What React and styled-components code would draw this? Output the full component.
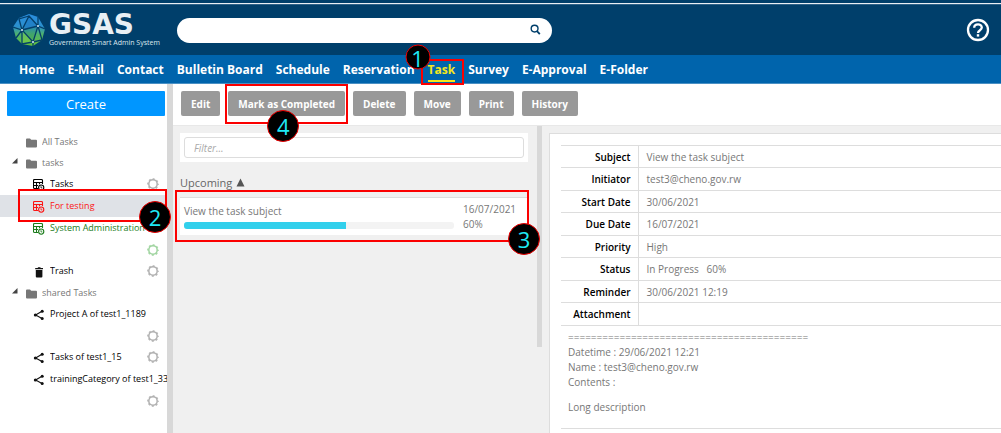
import React from "react";
import styled, { createGlobalStyle, css } from "styled-components";

const GlobalStyle = createGlobalStyle`
  * { box-sizing: border-box; }
  body {
    margin: 0;
    background: #fff;
    color: #777;
    font-family: "Open Sans", "Noto Sans", sans-serif;
    font-size: 10px;
  }
  button, input { font-family: inherit; }
`;

const Page = styled.div`
  display: flex;
  flex-direction: column;
  min-height: 100vh;
`;

/* ---------- callouts ---------- */

const Callout = styled.span`
  position: absolute;
  z-index: 3;
  inset: ${(p) => p.$inset};
  border: 2px solid #fb0000;
  pointer-events: none;
`;

const Step = styled.span`
  position: absolute;
  z-index: 4;
  top: ${(p) => p.$top};
  left: ${(p) => p.$left};
  transform: translate(-50%, -50%);
  display: flex;
  align-items: center;
  justify-content: center;
  width: ${(p) => (p.$small ? "25px" : "32px")};
  height: ${(p) => (p.$small ? "25px" : "32px")};
  border: 1px solid #e00;
  border-radius: 50%;
  background: #000;
  color: #1fe9f5;
  font-size: 22px;
  font-weight: 500;
  line-height: 1;
  pointer-events: none;
`;

/* ---------- header ---------- */

const Header = styled.header`
  display: flex;
  align-items: center;
  height: 55px;
  padding: 5px 11px 0 13px;
  background: linear-gradient(#003f6b 3px, #e9eff4 3px, #e9eff4 4px, #2f6288 4px, #2f6288 5px, #003f6b 5px);
`;

const Brand = styled.a`
  display: flex;
  align-items: center;
  gap: 4px;
  width: 164px;
  color: #e8eff4;
  text-decoration: none;
`;

const BrandText = styled.span`
  display: flex;
  flex-direction: column;
`;

const BrandName = styled.strong`
  font: 700 28px/26px "DejaVu Sans", sans-serif;
`;

const BrandLine = styled.span`
  font: 400 7px/10px "Open Sans", sans-serif;
  color: #dde7ee;
  white-space: nowrap;
`;

const Search = styled.form`
  display: flex;
  align-items: center;
  width: 375px;
  height: 25px;
  padding: 0 10px 0 14px;
  border-radius: 13px;
  background: #fff;
`;

const SearchInput = styled.input`
  flex: 1;
  min-width: 0;
  border: 0;
  outline: 0;
  background: transparent;
  font-size: 12px;
`;

const IconButton = styled.button`
  display: flex;
  padding: 0;
  border: 0;
  background: none;
  color: ${(p) => p.$color || "inherit"};
`;

const HelpSlot = styled.div`
  margin-left: auto;
`;

const Nav = styled.nav`
  display: flex;
  align-items: center;
  gap: 13px;
  height: 29px;
  padding: 0 19px;
  background: #0064ac;
  border-bottom: 1px solid #4a90c4;
`;

const NavItem = styled.div`
  position: relative;
  height: 28px;
`;

const NavLink = styled.a`
  display: block;
  height: 27px;
  line-height: 29px;
  font-size: 12px;
  font-weight: 700;
  color: #fff;
  text-decoration: none;
  white-space: nowrap;
  ${(p) => p.$active && css`
    color: #f4e61c;
    border-bottom: 2px solid #f4e61c;
  `}
`;

/* ---------- body ---------- */

const Body = styled.div`
  display: grid;
  grid-template-columns: 173px minmax(0, 1fr);
  flex: 1;
`;

const Sidebar = styled.aside`
  position: relative;
  z-index: 1;
  padding-top: 7px;
  border-right: 6px solid #d8d8d8;
  background: #fff;
`;

const CreateButton = styled.button`
  display: block;
  width: calc(100% - 9px);
  height: 25px;
  margin: 0 2px 15px 7px;
  padding: 0;
  border: 0;
  border-radius: 1px;
  background: #0096ff;
  color: #fff;
  font-size: 13px;
`;

const Tree = styled.ul`
  margin: 0;
  padding: 0;
  list-style: none;
`;

const TreeRow = styled.li`
  position: relative;
  display: flex;
  align-items: center;
  height: ${(p) => (p.$folder ? "21px" : "22px")};
  padding-left: ${(p) => (p.$folder ? "12px" : "33px")};
  padding-right: 8px;
  background: ${(p) => (p.$selected ? "#dfe2e7" : "transparent")};
  color: ${(p) => p.$color};
`;

const GearRow = styled.li`
  display: flex;
  align-items: center;
  justify-content: flex-end;
  height: 21px;
  padding-right: 8px;
`;

const Arrow = styled.span`
  display: flex;
  width: 14px;
  height: 10px;
`;

const TreeIcon = styled.span`
  display: flex;
  padding-top: 2px;
`;

const TreeLink = styled.a`
  flex: 1;
  overflow: hidden;
  margin-left: 5px;
  margin-right: ${(p) => (p.$wide ? "-8px" : "0")};
  color: inherit;
  font-size: 9px;
  font-weight: 500;
  line-height: 16px;
  text-decoration: none;
  white-space: nowrap;
`;

const Main = styled.main`
  display: flex;
  flex-direction: column;
  background: #f0f0f0;
`;

const Toolbar = styled.div`
  position: relative;
  z-index: 2;
  display: flex;
  gap: 8px;
  height: 42px;
  padding: 7px 8px;
  background: #fff;
  border-bottom: 1px solid #e8e8e8;
`;

const ToolItem = styled.div`
  position: relative;
`;

const ToolButton = styled.button`
  height: 25px;
  padding: 0 10px;
  border: 0;
  border-radius: 2px;
  background: #999;
  color: #fff;
  font-size: 10px;
  font-weight: 700;
  white-space: nowrap;
`;

const Panes = styled.div`
  display: flex;
  flex: 1;
`;

const ListPane = styled.section`
  position: relative;
  z-index: 1;
  width: 364px;
  padding: 7px 9px 0 7px;
`;

const FilterBox = styled.div`
  padding: 4px;
  background: #fff;
`;

const FilterInput = styled.input`
  display: block;
  width: 100%;
  height: 21px;
  padding: 0 9px;
  border: 1px solid #ddd;
  border-radius: 3px;
  background: #fff;
  font-size: 10px;
  font-style: italic;
  &::placeholder { color: #aaa; opacity: 1; }
`;

const GroupTitle = styled.h2`
  display: flex;
  align-items: center;
  gap: 4px;
  height: 16px;
  margin: 12px 0 7px;
  color: #666;
  font-size: 11px;
  font-weight: 400;
`;

const Card = styled.article`
  position: relative;
  display: grid;
  grid-template-columns: minmax(0, 1fr) 57px;
  column-gap: 9px;
  height: 38px;
  padding: 4px 8px 4px 4px;
  border-top: 1px solid #ddd;
  background: #fff;
`;

const CardMain = styled.div`
  display: flex;
  flex-direction: column;
  gap: 3px;
  padding-top: 2px;
`;

const CardSide = styled.div`
  line-height: 15px;
`;

const CardTitle = styled.div`
  line-height: 15px;
`;

const Track = styled.div`
  height: 7px;
  border-radius: 3px;
  overflow: hidden;
  background: #f3f3f3;
`;

const Fill = styled.div`
  height: 100%;
  background: #32d0ec;
`;

const Splitter = styled.div`
  width: 5px;
  height: 221px;
  background: #d8d8d8;
`;

const Detail = styled.section`
  flex: 1;
  min-width: 0;
  margin: 7px 0 0 7px;
  padding: 11px 0 0 11px;
  border: solid #ddd;
  border-width: 1px 0 0 1px;
  background: #fff;
`;

const Fields = styled.table`
  width: 100%;
  border-collapse: collapse;
  border-top: 1px solid #ddd;
`;

const FieldRow = styled.tr`
  height: 22px;
  border-bottom: 1px solid #ddd;
  &:nth-child(even) { height: 23px; }
`;

const FieldName = styled.th`
  width: 77px;
  padding: 0 7px 0 0;
  border-right: 1px solid #ddd;
  color: #000;
  font-weight: 600;
  line-height: 14px;
  text-align: right;
`;

const FieldValue = styled.td`
  padding: 0 8px;
  line-height: 14px;
  white-space: pre;
`;

const Description = styled.div`
  padding: 4px 7px 13px;
  border-bottom: 1px solid #ddd;
  line-height: 15px;
`;

const Paragraph = styled.p`
  margin: 0 0 10px;
  &:last-child { margin: 0; }
`;

/* ---------- icons ---------- */

const Globe = () => (
  <svg width="32" height="32" viewBox="0 0 32 32" aria-hidden="true">
    <defs>
      <linearGradient id="globe" x1="0" y1="0" x2="0" y2="1">
        <stop offset="0" stopColor="#2a8de0" />
        <stop offset=".4" stopColor="#2b90cc" />
        <stop offset=".62" stopColor="#4cb070" />
        <stop offset="1" stopColor="#66c238" />
      </linearGradient>
    </defs>
    <path d="M6 4L16 0L25 3L32 15L29 26L20 32L9 30L3 24L0 13Z" fill="url(#globe)" />
    <path d="M16 3L25 12L9 16Z" fill="#1268b8" opacity=".35" />
    <path d="M9 16L25 12L20 28Z" fill="#16785e" opacity=".2" />
    <path d="M9 16L20 28L9 29Z" fill="#8edb4a" opacity=".35" />
    <path
      d="M16 2L25 12L20 28L9 16ZM16 2L6 5L9 16L0 13M9 16L25 12M25 3L25 12L32 15M3 24L9 16L9 30L20 28L29 26L25 12M20 28V32"
      fill="none" stroke="#043f6a" strokeWidth="1.3"
    />
    <g fill="#d8ecf7">
      <circle cx="25" cy="12" r="1" /><circle cx="9" cy="16" r="1" /><circle cx="20" cy="28" r="1" />
    </g>
  </svg>
);

const SearchIcon = () => (
  <svg width="12" height="12" viewBox="0 0 12 12" fill="none" stroke="#003f6b" aria-hidden="true">
    <circle cx="4.6" cy="4.6" r="3.4" strokeWidth="1.4" />
    <path d="M7 7.2L9.8 10.2" strokeWidth="1.8" />
  </svg>
);

const HelpIcon = () => (
  <svg width="24" height="24" viewBox="0 0 24 24" fill="none" stroke="currentColor" aria-hidden="true">
    <circle cx="12" cy="12" r="10" strokeWidth="2.3" />
    <path d="M8.2 9.8C8.2 5.3 15.8 5.3 15.8 9.6C15.8 12.2 12 12.2 12 15" strokeWidth="2.3" />
    <path d="M12 16.2V18.6" strokeWidth="2.4" />
  </svg>
);

const FolderIcon = () => (
  <svg width="11" height="10" viewBox="0 0 11 10" aria-hidden="true">
    <path d="M0 1.4Q0 .4 1 .4H4L5.2 1.8H10Q11 1.8 11 2.8V8.4Q11 9.4 10 9.4H1Q0 9.4 0 8.4Z" fill="#777" />
  </svg>
);

const TaskIcon = () => (
  <svg width="12" height="12" viewBox="0 0 12 12" fill="none" stroke="currentColor" aria-hidden="true">
    <path d="M5 9.5H1.5Q.5 9.5 .5 8.5V1.5Q.5 .5 1.5 .5H8.5Q9.5 .5 9.5 1.5V5M.5 3.5H9.5M.5 6.5H5M3.5 3.5V9.5M6.5 3.5V5.2" strokeWidth="1.1" />
    <circle cx="8.2" cy="8.6" r="2.6" strokeWidth="1.1" />
    <path d="M8 7.2V8.9H9.3" strokeWidth=".8" />
  </svg>
);

const TrashIcon = () => (
  <svg width="12" height="12" viewBox="0 0 12 12" fill="#111" aria-hidden="true">
    <path d="M2.2 2H4.6L5.2 1.2H7.2L7.8 2H10V3.2H2.2ZM2.8 4H9.4V10.4Q9.4 11.4 8.4 11.4H3.8Q2.8 11.4 2.8 10.4Z" />
  </svg>
);

const ShareIcon = () => (
  <svg width="12" height="12" viewBox="0 0 12 12" aria-hidden="true">
    <path d="M9 2.2L2.6 6L9 9.6" fill="none" stroke="#111" strokeWidth="1.1" />
    <g fill="#111">
      <circle cx="9.2" cy="2.2" r="1.5" /><circle cx="2.4" cy="6" r="1.6" /><circle cx="9.2" cy="9.6" r="1.5" />
    </g>
  </svg>
);

const GearIcon = ({ color = "#b0b0b0" }) => (
  <svg width="12" height="12" viewBox="0 0 12 12" fill="none" stroke={color} aria-hidden="true">
    <circle cx="6" cy="6" r="4.2" strokeWidth="1.5" />
    <circle cx="6" cy="6" r="5.2" strokeWidth="1.2" strokeDasharray="2 2.084" strokeDashoffset="1" />
  </svg>
);

const CornerArrow = () => (
  <svg width="6" height="6" viewBox="0 0 6 6" aria-hidden="true"><path d="M5.5 0V5.5H0Z" fill="#444" /></svg>
);

const UpTriangle = () => (
  <svg width="9" height="9" viewBox="0 0 9 9" aria-hidden="true"><path d="M4.5 .5L8.5 8.5H.5Z" fill="#555" /></svg>
);

/* ---------- data ---------- */

const NAV = ["Home", "E-Mail", "Contact", "Bulletin Board", "Schedule", "Reservation", "Task", "Survey", "E-Approval", "E-Folder"];
const TOOLS = ["Edit", "Mark as Completed", "Delete", "Move", "Print", "History"];

const TREE = [
  { label: "All Tasks", folder: true },
  { label: "tasks", folder: true, open: true },
  { label: "Tasks", icon: TaskIcon, gear: "inline" },
  { label: "For testing", icon: TaskIcon, color: "#fb1414", selected: true },
  { label: "System Administration", icon: TaskIcon, color: "#1c7c1c", gear: "below", gearColor: "#9fd49f" },
  { label: "Trash", icon: TrashIcon, gear: "inline" },
  { label: "shared Tasks", folder: true, open: true },
  { label: "Project A of test1_1189", icon: ShareIcon, gear: "below" },
  { label: "Tasks of test1_15", icon: ShareIcon, gear: "inline" },
  { label: "trainingCategory of test1_33", icon: ShareIcon, gear: "below" },
];

const FIELDS = [
  ["Subject", "View the task subject"],
  ["Initiator", "test3@cheno.gov.rw"],
  ["Start Date", "30/06/2021"],
  ["Due Date", "16/07/2021"],
  ["Priority", "High"],
  ["Status", "In Progress   60%"],
  ["Reminder", "30/06/2021 12:19"],
  ["Attachment", ""],
];

const progress = 60;

function TreeEntry({ item }) {
  const Icon = item.folder ? FolderIcon : item.icon;
  const gear = (
    <IconButton type="button" aria-label={`${item.label} settings`}>
      <GearIcon color={item.gearColor} />
    </IconButton>
  );
  return (
    <>
      <TreeRow $folder={item.folder} $selected={item.selected} $color={item.color || (item.folder ? "#777" : "#000")}>
        {item.folder && <Arrow>{item.open && <CornerArrow />}</Arrow>}
        <TreeIcon><Icon /></TreeIcon>
        <TreeLink href="#" $wide={item.gear === "below"}>{item.label}</TreeLink>
        {item.gear === "inline" && gear}
        {item.selected && (
          <>
            <Callout $inset="-6px 0 -5px 18px" />
            <Step $top="22px" $left="155px">2</Step>
          </>
        )}
      </TreeRow>
      {item.gear === "below" && <GearRow>{gear}</GearRow>}
    </>
  );
}

export default function App() {
  return (
    <Page>
      <GlobalStyle />
      <Header>
        <Brand href="#">
          <Globe />
          <BrandText>
            <BrandName>GSAS</BrandName>
            <BrandLine>Government Smart Admin System</BrandLine>
          </BrandText>
        </Brand>
        <Search role="search">
          <SearchInput type="text" aria-label="Search" />
          <IconButton type="button" aria-label="Search"><SearchIcon /></IconButton>
        </Search>
        <HelpSlot>
          <IconButton type="button" $color="#fff" aria-label="Help"><HelpIcon /></IconButton>
        </HelpSlot>
      </Header>
      <Nav>
        {NAV.map((name) => (
          <NavItem key={name}>
            <NavLink href="#" $active={name === "Task"}>{name}</NavLink>
            {name === "Task" && (
              <>
                <Callout $inset="4px -9px -2px -7px" />
                <Step $small $top="2px" $left="-10px">1</Step>
              </>
            )}
          </NavItem>
        ))}
      </Nav>
      <Body>
        <Sidebar>
          <CreateButton type="button">Create</CreateButton>
          <Tree>
            {TREE.map((item) => <TreeEntry key={item.label} item={item} />)}
          </Tree>
        </Sidebar>
        <Main>
          <Toolbar>
            {TOOLS.map((name) => (
              <ToolItem key={name}>
                <ToolButton type="button">{name}</ToolButton>
                {name === "Mark as Completed" && (
                  <>
                    <Callout $inset="-7px -3px -6px -3px" />
                    <Step $top="35px" $left="55px">4</Step>
                  </>
                )}
              </ToolItem>
            ))}
          </Toolbar>
          <Panes>
            <ListPane>
              <FilterBox>
                <FilterInput type="text" placeholder="Filter..." aria-label="Filter tasks" />
              </FilterBox>
              <GroupTitle>Upcoming <UpTriangle /></GroupTitle>
              <Card>
                <CardMain>
                  <CardTitle>View the task subject</CardTitle>
                  <Track><Fill style={{ width: `${progress}%` }} /></Track>
                </CardMain>
                <CardSide>
                  <div>16/07/2021</div>
                  <div>{progress}%</div>
                </CardSide>
                <Callout $inset="-8px -1px -7px -5px" />
                <Step $top="41px" $left="344px">3</Step>
              </Card>
            </ListPane>
            <Splitter />
            <Detail>
              <Fields>
                <tbody>
                  {FIELDS.map(([name, value]) => (
                    <FieldRow key={name}>
                      <FieldName scope="row">{name}</FieldName>
                      <FieldValue>{value}</FieldValue>
                    </FieldRow>
                  ))}
                </tbody>
              </Fields>
              <Description>
                <Paragraph>
                  {"=".repeat(42)}<br />
                  Datetime : 29/06/2021 12:21<br />
                  Name : test3@cheno.gov.rw<br />
                  Contents :
                </Paragraph>
                <Paragraph>Long description</Paragraph>
              </Description>
            </Detail>
          </Panes>
        </Main>
      </Body>
    </Page>
  );
}
